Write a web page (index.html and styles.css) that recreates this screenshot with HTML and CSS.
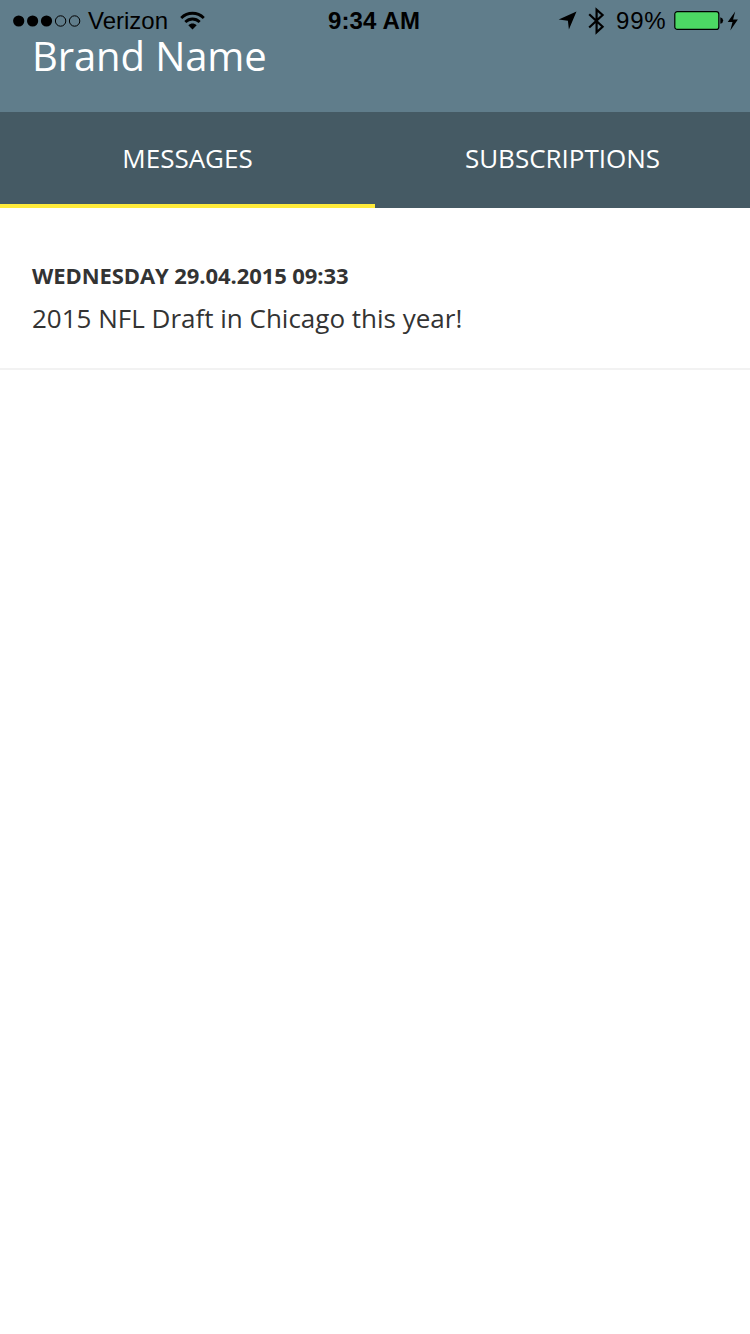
FILE: index.html
```html
<!DOCTYPE html>
<html lang="en">
<head>
<meta charset="utf-8">
<title>Brand Name</title>
<link rel="stylesheet" href="styles.css">
</head>
<body>
<header class="header">
  <div class="status">
    <div class="status-left">
      <svg class="signal" width="68" height="12" viewBox="0 0 68 12">
        <circle cx="5.7" cy="6" r="5.6"/><circle cx="19.6" cy="6" r="5.6"/><circle cx="33.5" cy="6" r="5.6"/>
        <g fill="none" stroke="#000" stroke-width="1"><circle cx="47.6" cy="6" r="5.2"/><circle cx="61.6" cy="6" r="5.2"/></g>
      </svg>
      <span class="carrier">Verizon</span>
      <svg class="wifi" width="26" height="20" viewBox="0 0 26 20">
        <g fill="none" stroke="#000" stroke-width="2.8">
          <path d="M1.2 6.9C7.700 .7 17.300 .7 23.800 6.900"/>
          <path d="M5.300 11C9.500 7 15.500 7 19.700 11"/>
        </g>
        <path d="M8.300 14.200C10.700 12 14.300 12 16.700 14.200L12.500 18.600Z"/>
      </svg>
    </div>
    <span class="time">9:34 AM</span>
    <div class="status-right">
      <svg class="location" width="20" height="20" viewBox="0 0 20 20"><path d="M18.500 1.500L10.900 19.500L9.900 10.700L.700 9.400Z"/></svg>
      <svg class="bluetooth" width="17" height="28" viewBox="0 0 17 28"><path d="M1.200 7.200L14.600 19.700L8.600 25.200V2.600L14.600 8L1.200 20.500" fill="none" stroke="#000" stroke-width="2.2"/></svg>
      <span class="percent">99%</span>
      <svg class="battery" width="50" height="20" viewBox="0 0 50 20">
        <rect x=".8" y="1.600" width="44" height="17.800" rx="2.500" fill="#4cd964" stroke="#000" stroke-width="1.200"/>
        <path d="M46.300 7.200Q49.200 8 49.200 10.500T46.300 13.800Z"/>
      </svg>
      <svg class="bolt" width="12" height="20" viewBox="0 0 12 20"><path d="M8.200 .5L.7 11H5.500L3.300 19.500L10.900 8.500H6.100Z"/></svg>
    </div>
  </div>
  <h1 class="brand">Brand Name</h1>
</header>
<nav class="tabs">
  <a class="tab tab-active">MESSAGES</a>
  <a class="tab">SUBSCRIPTIONS</a>
</nav>
<main class="messages">
  <article class="message">
    <div class="message-date">WEDNESDAY 29.04.2015 09:33</div>
    <div class="message-text">2015 NFL Draft in Chicago this year!</div>
  </article>
</main>
</body>
</html>
```
FILE: styles.css
```css
* { box-sizing: border-box; }
body {
  margin: 0;
  min-height: 1334px;
  background: #fff;
  color: #333;
  font-family: "Open Sans", sans-serif;
}
svg { display: block; flex: none; }
.header { height: 112px; background: #607d8b; }
.status {
  display: grid;
  grid-template-columns: 1fr auto 1fr;
  align-items: center;
  height: 40px;
  padding: 0 11px 0 13px;
  color: #000;
  font: 24px/28px "Liberation Sans", Arial, sans-serif;
  white-space: nowrap;
}
.status-left, .status-right { display: flex; align-items: center; }
.status-right { justify-content: flex-end; }
.status svg { margin-top: 1px; }
.status .battery, .status .location { margin-top: 0; }
.carrier, .time, .percent { padding-top: 2px; }
.carrier { margin-left: 7px; }
.status .wifi { margin-left: 12px; }
.time { padding-right: 4px; font-weight: bold; letter-spacing: .15px; }
.bluetooth { margin-left: 10px; }
.percent { margin-left: 11px; letter-spacing: .8px; }
.battery { margin-left: 7px; }
.bolt { margin-left: 3.5px; }
.brand {
  margin: 0;
  padding-left: 32px;
  color: #fff;
  font-size: 40px;
  font-weight: 400;
  line-height: 32px;
  letter-spacing: -.1px;
}
.tabs { display: flex; height: 96px; background: #455a64; }
.tab {
  flex: 1;
  padding-top: 3px;
  border-bottom: 4px solid transparent;
  color: #fff;
  font-size: 26px;
  line-height: 86px;
  text-align: center;
}
.tab-active { border-bottom-color: #ffeb3b; }
.message { height: 162px; padding: 51px 32px 0; border-bottom: 2px solid #f2f2f2; }
.message-date { font-size: 22px; font-weight: 700; line-height: 32px; letter-spacing: -.08px; }
.message-text { margin-top: 8px; font-size: 26px; line-height: 38px; }
```
